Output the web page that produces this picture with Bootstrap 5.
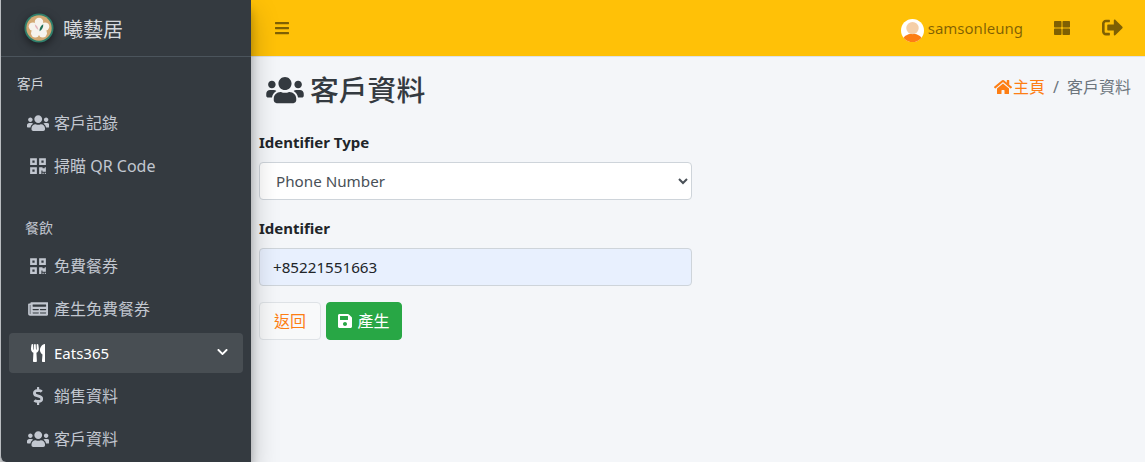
<!DOCTYPE html>
<html lang="zh-Hant">
<head>
<meta charset="utf-8">
<title>客戶資料</title>
<link href="https://cdn.jsdelivr.net/npm/bootstrap@5.3.0/dist/css/bootstrap.min.css" rel="stylesheet">
<style>
html,body{height:462px;overflow:hidden}
body{font-family:"Noto Sans","Noto Sans CJK TC",sans-serif;background:#f4f6f9;color:#212529;font-size:15px}
.shell{height:462px}
.side{width:251px;flex:none;background:#343a40;color:#c2c7d0;border-left:1px solid #b9bcc0;border-bottom-left-radius:6px;box-shadow:0 14px 28px rgba(0,0,0,.25),0 10px 10px rgba(0,0,0,.22);position:relative;z-index:2;overflow:hidden}
.side>*{flex:none}
.brand{height:57px;border-bottom:1px solid #4b545c;padding-left:23px;gap:9px;font-size:20px;color:#d5d8dc}
.brand svg{width:30px;height:30px;filter:drop-shadow(0 3px 4px rgba(0,0,0,.5))}
.brand span{padding-top:3px}
.sec-a{padding:17px 0 0 16px;height:46px;font-size:13.6px;line-height:20px;color:#d0d4da}
.sec-b{padding:0 0 0 24px;height:20px;font-size:14px;line-height:20px;color:#c2c7d0;margin:29px 0 8px}
.item{height:40px;margin:0 8px 3px;padding:0 8px 0 17px;border-radius:4px;color:#c2c7d0;font-size:16px;text-decoration:none}
.item:hover{color:#c2c7d0}
.item.on{background:rgba(255,255,255,.1);color:#fff;font-size:15px;margin-top:1px}
.item.on:hover{color:#fff}
.ico{width:24px;margin-right:4px;display:flex;justify-content:center;flex:none}
.ico svg{height:18px;fill:currentColor;display:block}
.chev{width:11px;height:12px;fill:#fff;margin:0 7px 2px 0}
.top{background:#ffc107;border-bottom:1px solid #dee2e6;padding-left:24px;color:rgba(0,0,0,.5);box-sizing:content-box;height:56px}
.top svg{fill:currentColor;display:block}
.burger{width:14px;height:16px}
.who{font-size:15px;gap:4px;margin-right:31px}
.who svg{width:23px;height:23px;margin-top:4px}
.grid-ic{width:16px;height:16px;margin-right:32px}
.out-ic{width:21px;height:21px;margin-right:22px;margin-top:-2px}
.head{padding:15px 14px 0 15px;height:74px}
.head h1{font-size:28.8px;font-weight:500;margin:0;color:#343a40;line-height:36px;gap:6px}
.head h1 svg{width:38px;height:30px;fill:#343a40}
.crumb{font-size:16px;margin-top:3px;color:#6c757d;line-height:24px}
.crumb a{color:#fd7e14;text-decoration:none}
.crumb a svg{width:18px;height:16px;fill:#fd7e14;vertical-align:-2px;margin-right:1px}
.crumb i{font-style:normal;margin:0 8px}
.pane{padding:0 0 0 8px;width:441px}
.lbl{font-size:15px;font-weight:700;line-height:22px;margin:0 0 9px;color:#212529}
.field{height:38px;width:100%;border:1px solid #ced4da;border-radius:4px;font-size:15.2px;color:#495057;margin-bottom:17px;display:block}
select.field{padding:0 12px;background:#fff}
input.field{background:#e8f0fe;padding:0 13px;color:#212529;margin-bottom:16px}
input.field:focus{background:#e8f0fe;box-shadow:none}
.back{height:38px;width:62px;padding:0;border:1px solid #dee2e6;background:#f8f9fa;color:#fd7e14;font-size:16px;border-radius:4px}
.save{height:38px;width:76px;padding:0;background:#28a745;border:1px solid #28a745;color:#fff;font-size:16px;border-radius:4px}
.save svg{width:14px;height:16px;fill:#fff;margin-right:5px;vertical-align:-2px}
.btn-row{gap:5px}
</style>
</head>
<body>
<svg width="0" height="0" class="position-absolute">
<symbol id="i-users" viewBox="0 0 640 512"><path d="M96 224c35.300 0 64-28.700 64-64s-28.700-64-64-64-64 28.700-64 64 28.700 64 64 64zm448 0c35.300 0 64-28.700 64-64s-28.700-64-64-64-64 28.700-64 64 28.700 64 64 64zm32 32h-64c-17.600 0-33.500 7.100-45.100 18.600 40.300 22.100 68.900 62 75.100 109.400h66c17.700 0 32-14.300 32-32v-32c0-35.300-28.700-64-64-64zm-256 0c61.900 0 112-50.100 112-112S381.900 32 320 32 208 82.100 208 144s50.100 112 112 112zm76.800 32h-8.300c-20.800 10-43.900 16-68.500 16s-47.600-6-68.500-16h-8.300C179.600 288 128 339.600 128 403.200V432c0 26.500 21.500 48 48 48h288c26.500 0 48-21.500 48-48v-28.800c0-63.600-51.600-115.200-115.200-115.200zm-223.700-13.400C161.500 263.100 145.600 256 128 256H64c-35.300 0-64 28.700-64 64v32c0 17.700 14.300 32 32 32h65.900c6.300-47.400 34.900-87.300 75.200-109.400z"/></symbol>
<symbol id="i-qr" viewBox="0 0 448 512"><path d="M0 224h192V32H0v192zM64 96h64v64H64V96zm192-64v192h192V32H256zm128 128h-64V96h64v64zM0 480h192V288H0v192zm64-128h64v64H64v-64zm352-64h32v128h-96v-32h-32v96h-64V288h96v32h64v-32zm0 160h32v32h-32v-32zm-64 0h32v32h-32v-32z"/></symbol>
<symbol id="i-news" viewBox="0 0 576 512"><path d="M552 64H88c-13.255 0-24 10.745-24 24v8H24c-13.255 0-24 10.745-24 24v272c0 30.928 25.072 56 56 56h472c26.510 0 48-21.490 48-48V88c0-13.255-10.745-24-24-24zM56 400a8 8 0 0 1-8-8V144h16v248a8 8 0 0 1-8 8zm236-16H140c-6.627 0-12-5.373-12-12v-8c0-6.627 5.373-12 12-12h152c6.627 0 12 5.373 12 12v8c0 6.627-5.373 12-12 12zm208 0H348c-6.627 0-12-5.373-12-12v-8c0-6.627 5.373-12 12-12h152c6.627 0 12 5.373 12 12v8c0 6.627-5.373 12-12 12zm-208-96H140c-6.627 0-12-5.373-12-12v-8c0-6.627 5.373-12 12-12h152c6.627 0 12 5.373 12 12v8c0 6.627-5.373 12-12 12zm208 0H348c-6.627 0-12-5.373-12-12v-8c0-6.627 5.373-12 12-12h152c6.627 0 12 5.373 12 12v8c0 6.627-5.373 12-12 12zm0-96H140c-6.627 0-12-5.373-12-12v-40c0-6.627 5.373-12 12-12h360c6.627 0 12 5.373 12 12v40c0 6.627-5.373 12-12 12z"/></symbol>
<symbol id="i-fork" viewBox="0 0 416 512"><path d="M207.900 15.200c.8 4.700 16.100 94.500 16.100 128.800 0 52.300-27.800 89.600-68.900 104.600L168 486.700c.7 13.700-10.200 25.300-24 25.300H80c-13.700 0-24.700-11.500-24-25.300l12.900-238.100C27.700 233.600 0 196.200 0 144 0 109.600 15.300 19.900 16.100 15.200 19.300-5.100 61.400-5.400 64 16.300v141.200c1.300 3.400 15.100 3.200 16 0 1.400-25.300 7.900-139.200 8-141.800 3.300-20.800 44.700-20.800 47.900 0 .2 2.700 6.600 116.500 8 141.800.9 3.200 14.800 3.400 16 0V16.300c2.600-21.600 44.800-21.400 48-1.100zm119.200 285.700l-15 185.100c-1.200 14 9.900 26 23.900 26h56c13.300 0 24-10.700 24-24V24c0-13.200-10.700-24-24-24-82.500 0-221.400 178.500-64.900 300.900z"/></symbol>
<symbol id="i-dollar" viewBox="0 0 288 512"><path d="M209.200 233.400l-108-31.600C88.700 198.200 80 186.500 80 173.500c0-16.300 13.200-29.500 29.500-29.500h66.300c12.200 0 24.200 3.700 34.200 10.500 6.100 4.100 14.300 3.100 19.500-2l34.800-34c7.100-6.900 6.100-18.400-1.800-24.500C238 74.800 207.400 64.100 176 64V16c0-8.800-7.200-16-16-16h-32c-8.800 0-16 7.200-16 16v48h-2.500C45.800 64-5.400 118.700.5 183.600c4.200 46.100 39.400 83.600 83.800 96.600l102.500 30c12.500 3.700 21.200 15.300 21.200 28.300 0 16.300-13.200 29.500-29.500 29.500h-66.300C100 368 88 364.300 78 357.500c-6.100-4.100-14.300-3.100-19.500 2l-34.800 34c-7.100 6.900-6.100 18.400 1.800 24.500 24.500 19.200 55.100 29.900 86.500 30v48c0 8.800 7.200 16 16 16h32c8.800 0 16-7.200 16-16v-48.200c46.600-.9 90.300-28.600 105.700-72.700 21.500-61.600-14.600-124.800-72.500-141.700z"/></symbol>
<symbol id="i-chev" viewBox="0 0 448 512"><path d="M207.029 381.476L12.686 187.132c-9.373-9.373-9.373-24.569 0-33.941l22.667-22.667c9.357-9.357 24.522-9.375 33.901-.04L224 284.505l154.745-154.021c9.379-9.335 24.544-9.317 33.901.04l22.667 22.667c9.373 9.373 9.373 24.569 0 33.941L240.971 381.476c-9.373 9.372-24.569 9.372-33.942 0z"/></symbol>
<symbol id="i-bars" viewBox="0 0 448 512"><path d="M16 132h416c8.837 0 16-7.163 16-16V76c0-8.837-7.163-16-16-16H16C7.163 60 0 67.163 0 76v40c0 8.837 7.163 16 16 16zm0 160h416c8.837 0 16-7.163 16-16v-40c0-8.837-7.163-16-16-16H16c-8.837 0-16 7.163-16 16v40c0 8.837 7.163 16 16 16zm0 160h416c8.837 0 16-7.163 16-16v-40c0-8.837-7.163-16-16-16H16c-8.837 0-16 7.163-16 16v40c0 8.837 7.163 16 16 16z"/></symbol>
<symbol id="i-grid" viewBox="0 0 512 512"><path d="M296 32h192c13.255 0 24 10.745 24 24v160c0 13.255-10.745 24-24 24H296c-13.255 0-24-10.745-24-24V56c0-13.255 10.745-24 24-24zm-80 0H24C10.745 32 0 42.745 0 56v160c0 13.255 10.745 24 24 24h192c13.255 0 24-10.745 24-24V56c0-13.255-10.745-24-24-24zM0 296v160c0 13.255 10.745 24 24 24h192c13.255 0 24-10.745 24-24V296c0-13.255-10.745-24-24-24H24c-13.255 0-24 10.745-24 24zm296 184h192c13.255 0 24-10.745 24-24V296c0-13.255-10.745-24-24-24H296c-13.255 0-24 10.745-24 24v160c0 13.255 10.745 24 24 24z"/></symbol>
<symbol id="i-out" viewBox="0 0 512 512"><path d="M497 273L329 441c-15 15-41 4.500-41-17v-96H152c-13.300 0-24-10.700-24-24v-96c0-13.300 10.700-24 24-24h136V88c0-21.400 25.900-32 41-17l168 168c9.300 9.400 9.300 24.600 0 34zM192 436v-40c0-6.600-5.400-12-12-12H96c-17.700 0-32-14.300-32-32V160c0-17.700 14.300-32 32-32h84c6.600 0 12-5.400 12-12V76c0-6.600-5.400-12-12-12H96c-53 0-96 43-96 96v192c0 53 43 96 96 96h84c6.600 0 12-5.400 12-12z"/></symbol>
<symbol id="i-home" viewBox="0 0 576 512"><path d="M280.370 148.260L96 300.110V464a16 16 0 0 0 16 16l112.060-.29a16 16 0 0 0 15.920-16V368a16 16 0 0 1 16-16h64a16 16 0 0 1 16 16v95.640a16 16 0 0 0 16 16.050L464 480a16 16 0 0 0 16-16V300L295.670 148.260a12.190 12.190 0 0 0-15.300 0zM571.600 251.470L488 182.560V44.050a12 12 0 0 0-12-12h-56a12 12 0 0 0-12 12v72.610L318.470 43a48 48 0 0 0-61 0L4.340 251.470a12 12 0 0 0-1.600 16.900l25.500 31A12 12 0 0 0 45.150 301l235.220-193.740a12.190 12.190 0 0 1 15.300 0L530.900 301a12 12 0 0 0 16.900-1.600l25.500-31a12 12 0 0 0-1.700-16.930z"/></symbol>
<symbol id="i-save" viewBox="0 0 448 512"><path d="M433.941 129.941l-83.882-83.882A48 48 0 0 0 316.118 32H48C21.490 32 0 53.490 0 80v352c0 26.510 21.490 48 48 48h352c26.510 0 48-21.490 48-48V163.882a48 48 0 0 0-14.059-33.941zM224 416c-35.346 0-64-28.654-64-64 0-35.346 28.654-64 64-64s64 28.654 64 64c0 35.346-28.654 64-64 64zm96-304.520V212c0 6.627-5.373 12-12 12H76c-6.627 0-12-5.373-12-12V108c0-6.627 5.373-12 12-12h228.520c3.183 0 6.235 1.264 8.485 3.515l3.480 3.480A11.996 11.996 0 0 1 320 111.480z"/></symbol>
</svg>
<div class="d-flex shell">
  <aside class="side d-flex flex-column">
    <div class="brand d-flex align-items-center">
      <svg viewBox="0 0 32 32"><circle cx="16" cy="16" r="15.500" fill="#2f7f6c"/><circle cx="16" cy="16" r="13.500" fill="#d2a873"/><g fill="#f6f3ee"><circle cx="16" cy="9.500" r="4.500"/><circle cx="9.500" cy="14.500" r="4.500"/><circle cx="22.500" cy="14.500" r="4.500"/><circle cx="12" cy="21.500" r="4.500"/><circle cx="20" cy="21.500" r="4.500"/><circle cx="16" cy="16" r="5"/></g><path d="M11.500 12c2 1 3.300 3 3.800 6-2-.8-3.500-3-3.800-6z" fill="#e3b4bd"/><path d="M20.500 12c.3 3.200-1.200 6-3.900 7.500-.4-2.800 1.200-6 3.900-7.500z" fill="#1f6f58"/></svg>
      <span>曦藝居</span>
    </div>
    <div class="sec-a">客戶</div>
    <a class="item d-flex align-items-center" href="#"><span class="ico"><svg width="22.500"><use href="#i-users"/></svg></span>客戶記錄</a>
    <a class="item d-flex align-items-center" href="#"><span class="ico"><svg width="16"><use href="#i-qr"/></svg></span>掃瞄 QR Code</a>
    <div class="sec-b">餐飲</div>
    <a class="item d-flex align-items-center" href="#"><span class="ico"><svg width="16"><use href="#i-qr"/></svg></span>免費餐券</a>
    <a class="item d-flex align-items-center" href="#"><span class="ico"><svg width="20.500"><use href="#i-news"/></svg></span>產生免費餐券</a>
    <a class="item on d-flex align-items-center" href="#"><span class="ico"><svg width="14.600"><use href="#i-fork"/></svg></span><span class="flex-grow-1">Eats365</span><svg class="chev"><use href="#i-chev"/></svg></a>
    <a class="item d-flex align-items-center" href="#"><span class="ico"><svg width="10.200"><use href="#i-dollar"/></svg></span>銷售資料</a>
    <a class="item d-flex align-items-center" href="#"><span class="ico"><svg width="22.500"><use href="#i-users"/></svg></span>客戶資料</a>
  </aside>
  <main class="flex-grow-1">
    <nav class="top d-flex align-items-center">
      <svg class="burger me-auto"><use href="#i-bars"/></svg>
      <div class="who d-flex align-items-center">
        <svg viewBox="0 0 24 24"><circle cx="12" cy="12" r="12" fill="#fff"/><clipPath id="av"><circle cx="12" cy="12" r="12"/></clipPath><g clip-path="url(#av)"><ellipse cx="12" cy="24" rx="11" ry="9" fill="#fd7e14"/><circle cx="12" cy="9.500" r="6.500" fill="#f5cfa8"/></g></svg>
        <span>samsonleung</span>
      </div>
      <svg class="grid-ic"><use href="#i-grid"/></svg>
      <svg class="out-ic"><use href="#i-out"/></svg>
    </nav>
    <div class="head d-flex justify-content-between align-items-start">
      <h1 class="d-flex align-items-center"><svg><use href="#i-users"/></svg>客戶資料</h1>
      <div class="crumb"><a href="#"><svg><use href="#i-home"/></svg>主頁</a><i>/</i>客戶資料</div>
    </div>
    <form class="pane">
      <label class="lbl d-block">Identifier Type</label>
      <select class="field"><option>Phone Number</option></select>
      <label class="lbl d-block">Identifier</label>
      <input class="form-control field" value="+85221551663">
      <div class="d-flex btn-row">
        <button type="button" class="btn back">返回</button>
        <button type="button" class="btn save"><svg><use href="#i-save"/></svg>產生</button>
      </div>
    </form>
  </main>
</div>
<script src="https://cdn.jsdelivr.net/npm/bootstrap@5.3.0/dist/js/bootstrap.bundle.min.js"></script>
</body>
</html>
